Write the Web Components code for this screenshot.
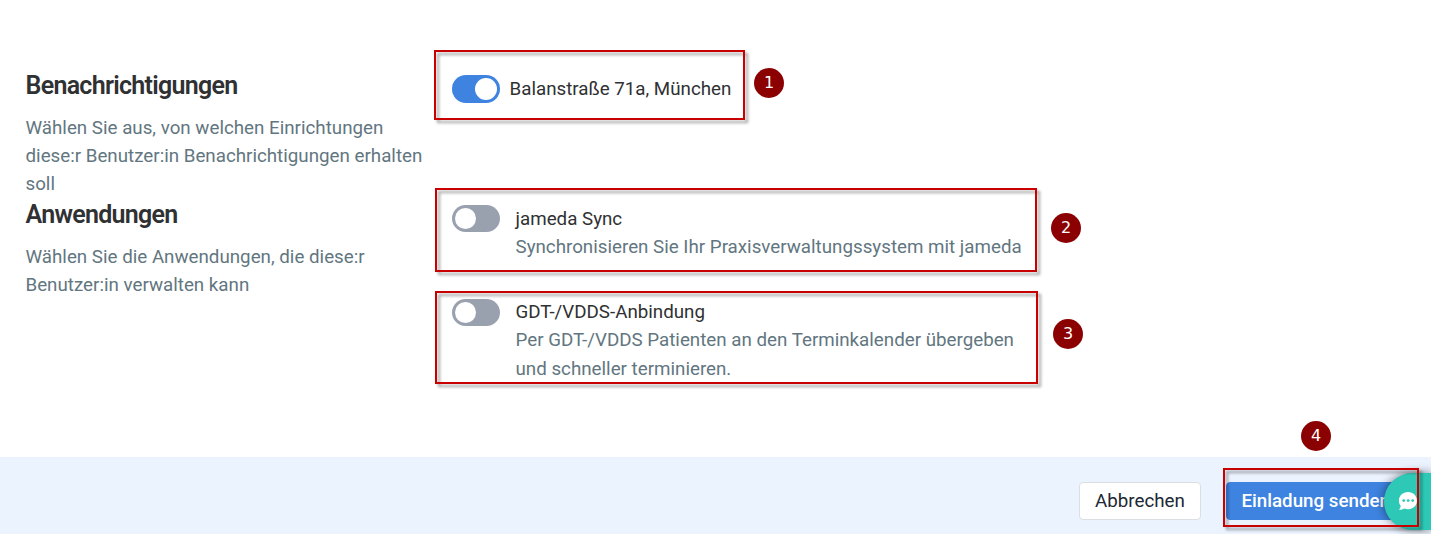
<!DOCTYPE html>
<html lang="de">
<head>
<meta charset="utf-8">
<title>Benutzer einladen</title>
<style>
html,body{margin:0;padding:0;background:#fff}
body{font-family:Roboto,"Liberation Sans",sans-serif;overflow:hidden}
</style>
</head>
<body>
<invite-page></invite-page>
<script>
const define = (name, html, extra) => customElements.define(name, class extends HTMLElement {
  constructor() {
    super();
    const t = document.createElement('template');
    t.innerHTML = html;
    this.attachShadow({mode: 'open'}).append(t.content.cloneNode(true));
  }
  connectedCallback() { if (extra) extra(this); }
});

define('section-intro', `
<style>
:host{display:block;color:#627680;font-size:18.75px;line-height:28px}
h2{margin:0 0 14px;color:#2f3133;font-size:25px;line-height:28px;font-weight:600;letter-spacing:-.71px}
p{margin:0}
</style>
<h2><slot name="title"></slot></h2><p><slot></slot></p>`);

define('toggle-switch', `
<style>
:host{display:flex;box-sizing:border-box;flex:none;width:48px;height:27px;padding:3px;border-radius:14px;background:#9aa1ae;align-items:center}
:host([checked]){height:28px;background:#3d83df;justify-content:flex-end}
i{width:21px;height:21px;border-radius:50%;background:#fff}
:host([checked]) i{width:22px;height:22px}
</style><i></i>`);

define('app-option', `
<style>
:host{display:flex;gap:15.500px;align-items:flex-start;font-size:18.75px;line-height:28px;color:#2f3133}
:host([compact]){gap:9.500px}
.desc{color:#627680;line-height:28px}
</style>
<slot name="switch"></slot>
<div><div><slot></slot></div><div class="desc"><slot name="desc"></slot></div></div>`);

define('action-button', `
<style>
:host{display:flex;box-sizing:border-box;height:38px;align-items:center;padding:0 15.500px;border:1px solid #dcdfe2;border-radius:4px;background:#fff;color:#202833;font-size:18.75px;line-height:28px;white-space:nowrap}
:host([primary]){padding:0 16px 0 14px;border-color:#3d83df;background:#3d83df;color:#fff;font-weight:500}
</style><slot></slot>`);

define('chat-tab', `
<style>
:host{position:absolute;left:1384px;top:473px;width:47px;height:57px;border-radius:28.5px 0 0 28.5px;background:#2ec9b6;box-shadow:0 0 10px rgba(0,0,0,.5)}
svg{position:absolute;left:14px;top:18px}
</style>
<svg width="20" height="21" viewBox="0 0 20 21"><path fill="#fff" d="M10 1C4.8 1 .9 4.8.9 9.7c0 2.1.7 3.7 1.8 5.1-.1 1.6-.9 2.9-1.8 4 2.1.1 4-.6 5.4-1.4 1.1.5 2.4.8 3.7.8 5.1 0 9-3.6 9-8.4S15.200 1 10 1Z"/><g fill="#2ec9b6"><circle cx="5.700" cy="9.600" r="1.400"/><circle cx="10.200" cy="9.600" r="1.400"/><circle cx="14.700" cy="9.600" r="1.400"/></g></svg>`);

define('mark-frame', `
<style>
:host{position:absolute;box-sizing:border-box;border:2px solid #c80000;filter:drop-shadow(3px 3px 1.5px rgba(0,0,0,.38))}
</style>`, el => {
  const [x, y, w, h] = el.getAttribute('box').split(' ');
  Object.assign(el.style, {left: x + 'px', top: y + 'px', width: w + 'px', height: h + 'px'});
});

define('mark-badge', `
<style>
:host{position:absolute;display:flex;box-sizing:border-box;width:30px;height:30px;align-items:center;justify-content:center;border-radius:50%;background:#8b0000;color:#fff;font:16px/30px "DejaVu Sans",sans-serif}
</style><slot></slot>`, el => {
  const [x, y] = el.getAttribute('at').split(' ');
  el.style.left = x + 'px'; el.style.top = y + 'px';
});

define('invite-page', `
<style>
:host{display:flex;flex-direction:column;position:relative;width:1431px;height:534px;overflow:hidden}
main{flex:1;box-sizing:border-box;padding:72px 0 0 25.500px;display:grid;grid-template-columns:400px 590px;grid-template-rows:129px 1fr;column-gap:26.500px}
.one{padding-top:3px}
.apps{padding-top:4px;display:flex;flex-direction:column;gap:9px}
.apps app-option{min-height:85px}
.raised{display:block;margin-top:-1px;line-height:29px}
footer{height:77px;box-sizing:border-box;background:#ebf3fe;display:flex;justify-content:flex-end;align-items:flex-start;gap:25px;padding:25px 24px 0 0}
</style>
<main>
<section-intro><span slot="title">Benachrichtigungen</span>Wählen Sie aus, von welchen Einrichtungen diese:r Benutzer:in Benachrichtigungen erhalten soll</section-intro>
<div class="one"><app-option compact><toggle-switch slot="switch" checked></toggle-switch>Balanstraße 71a, München</app-option></div>
<section-intro><span slot="title">Anwendungen</span>Wählen Sie die Anwendungen, die diese:r Benutzer:in verwalten kann</section-intro>
<div class="apps">
<app-option><toggle-switch slot="switch"></toggle-switch>jameda Sync<span slot="desc">Synchronisieren Sie Ihr Praxisverwaltungssystem mit jameda</span></app-option>
<app-option><toggle-switch slot="switch"></toggle-switch><span class="raised">GDT-/VDDS-Anbindung</span><span class="raised" slot="desc">Per GDT-/VDDS Patienten an den Terminkalender übergeben<br>und schneller terminieren.</span></app-option>
</div>
</main>
<footer><action-button>Abbrechen</action-button><action-button primary>Einladung senden</action-button></footer>
<chat-tab></chat-tab>
<mark-frame box="434 50 311 70"></mark-frame>
<mark-frame box="435 188 602 84"></mark-frame>
<mark-frame box="435 291 603 93"></mark-frame>
<mark-frame box="1223 468 196 59"></mark-frame>
<mark-badge at="754 68">1</mark-badge>
<mark-badge at="1051 213">2</mark-badge>
<mark-badge at="1053 319">3</mark-badge>
<mark-badge at="1301 421">4</mark-badge>`);
</script>
</body>
</html>
